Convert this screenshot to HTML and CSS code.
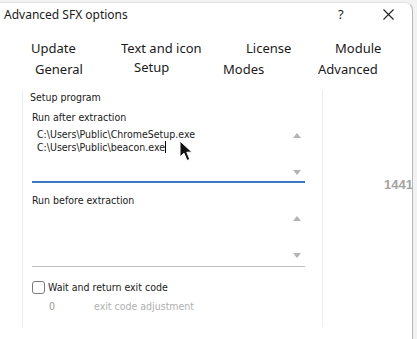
FILE: index.html
```html
<!DOCTYPE html>
<html>
<head>
<meta charset="utf-8">
<link rel="stylesheet" href="styles.css">
</head>
<body>
<div class="window">
  <div class="titlebar">
    <span class="title">Advanced SFX options</span>
    <span class="help">?</span>
    <span class="close"><svg width="11" height="11" viewBox="0 0 11 11"><path d="M0.5 0.5L10.5 10.5M10.5 0.5L0.5 10.5" stroke="#222" stroke-width="1.1"/></svg></span>
  </div>
  <div class="tabs">
    <div class="tabrow">
      <span class="tab w90">Update</span>
      <span class="tab w125">Text and icon</span>
      <span class="tab w89">License</span>
      <span class="tab">Module</span>
    </div>
    <div class="tabrow second">
      <span class="tab w99">General</span>
      <span class="tab w89 raised">Setup</span>
      <span class="tab w95">Modes</span>
      <span class="tab">Advanced</span>
    </div>
  </div>
  <div class="body">
    <div class="panel">
      <div class="group-title">Setup program</div>
      <div class="field">
        <div class="label">Run after extraction</div>
        <div class="editbox active">
          <div class="lines">
            <div>C:\Users\Public\ChromeSetup.exe</div>
            <div>C:\Users\Public\beacon.exe<span class="caret"></span></div>
          </div>
          <div class="scroll"><span class="up"></span><span class="down"></span></div>
        </div>
      </div>
      <div class="field second">
        <div class="label">Run before extraction</div>
        <div class="editbox">
          <div class="lines"></div>
          <div class="scroll"><span class="up"></span><span class="down"></span></div>
        </div>
      </div>
      <label class="check"><span class="box"></span>Wait and return exit code</label>
      <div class="adjust"><span class="zero">0</span><span class="hint">exit code adjustment</span></div>
    </div>
    <div class="side"><span class="num">1441</span></div>
  </div>
  <svg class="cursor" width="15" height="22" viewBox="0 0 15 22"><path d="M1 1L1 17L5 13.2L8 20.5L10.8 19.3L7.8 12.2L13 12.2Z" fill="#111" stroke="#fff" stroke-width="1"/></svg>
</div>
</body>
</html>
```
FILE: styles.css
```css
html, body { margin: 0; padding: 0; }
body {
  width: 417px; height: 339px; overflow: hidden;
  background: #f2f2f2;
  font-family: "Noto Sans", "Open Sans", sans-serif;
  color: #1a1a1a;
}
.window {
  position: relative;
  margin-top: 2px;
  width: 413px; height: 337px;
  background: #fff;
  border-right: 1px solid #b8b8b8;
  border-top: 1px solid #e2e2e2;
  border-top-right-radius: 8px;
  box-sizing: border-box;
}
.titlebar {
  display: flex; align-items: center;
  height: 22px;
  padding-left: 4px;
  font-size: 12px;
}
.title { width: 334px; }
.help { width: 45px; font-size: 13px; }
.close { width: 12px; display: flex; align-items: center; }
.tabs { padding-top: 12px; font-size: 13px; height: 65px; box-sizing: border-box; padding-left: 31px; }
.tabrow { display: flex; height: 21px; align-items: center; }
.tabrow.second { padding-left: 4px; }
.tab { white-space: nowrap; }
.w90 { width: 90px; }
.w125 { width: 125px; }
.w89 { width: 89px; }
.w99 { width: 99px; }
.w95 { width: 95px; }
.raised { margin-top: -4px; }
.body { display: flex; }
.panel {
  margin-left: 22px;
  width: 301px; height: 237px;
  border-left: 1px solid #ececec;
  border-right: 1px solid #ececec;
  box-sizing: border-box;
  font-family: "DejaVu Sans Condensed", "DejaVu Sans", sans-serif;
  font-size: 10.5px;
  padding-left: 7px;
}
.group-title { height: 14px; line-height: 14px; }
.field { margin-left: 2px; width: 273px; }
.label { margin-top: 6px; height: 14px; line-height: 14px; }
.editbox { display: flex; height: 57px; border-bottom: 2px solid #3a78c2; }
.field.second .label { margin-top: 10px; }
.field.second .editbox { height: 59px; border-bottom: 1px solid #bdbdbd; }
.lines { flex: 1; padding-left: 5px; padding-top: 4px; line-height: 13px; }
.caret { display: inline-block; width: 1px; height: 12px; background: #000; vertical-align: -2px; }
.scroll { width: 16px; display: flex; flex-direction: column; justify-content: space-between; align-items: center; padding: 9px 0 6px; }
.field.second .scroll { padding: 9px 0 8px; }
.up, .down { width: 0; height: 0; border-left: 4px solid transparent; border-right: 4px solid transparent; }
.up { border-bottom: 5px solid #b4b4b4; }
.down { border-top: 5px solid #b4b4b4; }
.check { display: flex; align-items: center; margin-top: 13px; margin-left: 2px; height: 14px; }
.box { width: 11px; height: 11px; border: 1px solid #7a7a7a; border-radius: 3px; margin-right: 3px; }
.adjust { display: flex; margin-top: 5px; height: 14px; line-height: 14px; color: #b0b0b0; }
.zero { margin-left: 19px; width: 45px; color: #999; }
.side { flex: 1; position: relative; }
.num {
  position: absolute; left: 61px; top: 87px;
  font-family: "Liberation Sans", Arial, sans-serif; font-weight: bold;
  font-size: 13px; color: #a3a3a3;
}
.cursor { position: absolute; left: 179px; top: 137px; }
```
